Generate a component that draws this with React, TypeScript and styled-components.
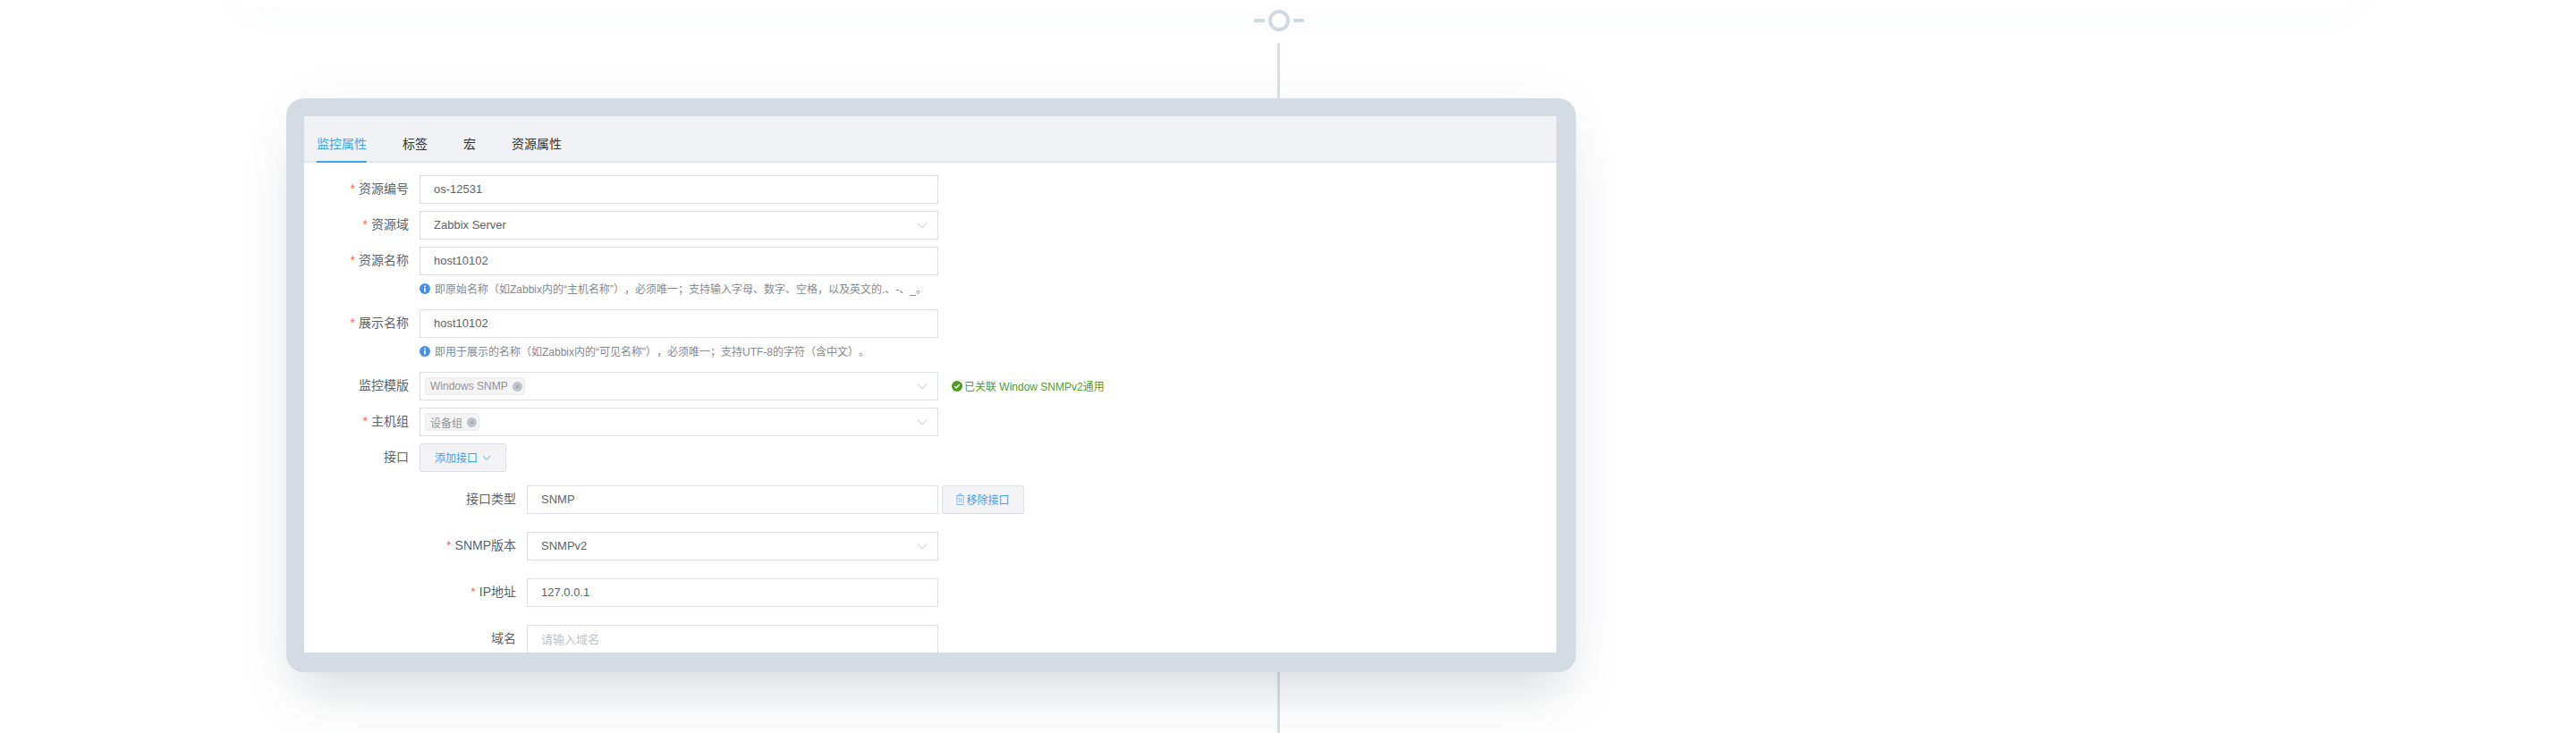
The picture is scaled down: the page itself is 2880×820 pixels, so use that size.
import React from 'react';
import styled, { createGlobalStyle } from 'styled-components';

const GlobalStyle = createGlobalStyle`
  html, body {
    margin: 0;
    padding: 0;
    background: #fff;
  }
  * {
    box-sizing: border-box;
  }
`;

const Page = styled.div`
  position: relative;
  width: 2880px;
  height: 820px;
  padding: 110px 0 0 320px;
  overflow: hidden;
  background: #fff;
  font-family: "Liberation Sans", "Noto Sans CJK SC", sans-serif;
  text-spacing-trim: space-all;
`;

/* the card above this one in the flow chart, only its shadow is still visible */
const PreviousCard = styled.div`
  position: absolute;
  left: 270px;
  top: -60px;
  width: 2360px;
  height: 68px;
  box-shadow: 0 0 50px rgba(90, 110, 120, 0.035);
`;

const Connector = styled.div<{ $top: number; $height: number }>`
  position: absolute;
  left: 1428px;
  top: ${p => p.$top}px;
  width: 3px;
  height: ${p => p.$height}px;
  background: #d9dfe9;
`;

const NodeIcon = styled.svg`
  position: absolute;
  left: 1400px;
  top: 9px;
`;

const Frame = styled.div`
  position: relative;
  width: 1442px;
  padding: 20px 22px 22px 20px;
  border-radius: 20px;
  background: #d5dbe2;
  box-shadow: 0 35px 60px -15px rgba(90, 100, 115, 0.22), 0 0 60px rgba(90, 100, 115, 0.03);
`;

const Screen = styled.div`
  height: 600px;
  overflow: hidden;
  background: #fff;
`;

const TabBar = styled.div`
  display: flex;
  gap: 40px;
  height: 52px;
  padding: 10px 0 0 14px;
  background: #f0f2f5;
  box-shadow: inset 0 -2px 0 #e4e7ed;
`;

const Tab = styled.div<{ $active?: boolean }>`
  height: 42px;
  border-bottom: 2px solid ${p => (p.$active ? '#3ea6ea' : 'transparent')};
  font-size: 14px;
  line-height: 42px;
  color: ${p => (p.$active ? '#3ea6ea' : '#303133')};
`;

const Form = styled.div`
  padding-top: 14px;
`;

const Row = styled.div<{ $gap?: number }>`
  display: flex;
  align-items: center;
  margin-bottom: ${p => p.$gap ?? 8}px;
`;

const Label = styled.div<{ $width: number }>`
  flex: none;
  width: ${p => p.$width}px;
  padding: 0 12px 2px 0;
  font-size: 14px;
  line-height: 30px;
  text-align: right;
  color: #606266;
`;

const Required = styled.span`
  margin-right: 4px;
  color: #f56c6c;
`;

const Field = styled.div<{ $width: number }>`
  flex: none;
  display: flex;
  align-items: center;
  justify-content: space-between;
  width: ${p => p.$width}px;
  height: 32px;
  padding: 0 11px 1px 15px;
  border: 1px solid #dcdfe9;
  background: #fff;
  font-size: 13px;
  color: #606266;
`;

const TagField = styled(Field)`
  padding: 0 11px 0 5px;
`;

const Placeholder = styled.span`
  color: #c0c4cc;
`;

const Tag = styled.span`
  display: inline-flex;
  align-items: center;
  gap: 5px;
  height: 20px;
  padding: 0 2px 0 5px;
  border: 1px solid #e9e9eb;
  border-radius: 4px;
  background: #f4f4f5;
  font-size: 12px;
  color: #909399;
`;

const Tip = styled.div`
  display: flex;
  align-items: center;
  gap: 5px;
  height: 30px;
  margin: 0 0 8px 129px;
  padding-bottom: 1px;
  font-size: 12px;
  color: #84888f;
`;

const Button = styled.button<{ $width: number; $gap: number; $left?: number }>`
  flex: none;
  display: flex;
  align-items: center;
  justify-content: center;
  gap: ${p => p.$gap}px;
  width: ${p => p.$width}px;
  height: 32px;
  margin-left: ${p => p.$left ?? 0}px;
  padding: 0 0 1px;
  border: 1px solid #dcdfe6;
  border-radius: 3px;
  background: #f4f4f6;
  font-family: inherit;
  font-size: 12px;
  color: #3e9fe8;
`;

const Hint = styled.div`
  display: flex;
  align-items: center;
  gap: 2px;
  margin-left: 15px;
  padding-bottom: 1px;
  font-size: 12px;
  color: #529b2e;
`;

const Chevron: React.FC<{ size?: number; color?: string }> = ({ size = 12, color = '#c0c4cc' }) => (
  <svg width={size} height={size} viewBox="0 0 12 12" fill="none">
    <path d="M1 3.5 6 8.8l5-5.3" stroke={color} strokeWidth="1" />
  </svg>
);

const InfoIcon = () => (
  <svg width="12" height="12" viewBox="0 0 12 12">
    <circle cx="6" cy="6" r="6" fill="#4a90e2" />
    <rect x="5.2" y="5" width="1.6" height="4.4" fill="#fff" />
    <rect x="5.2" y="2.6" width="1.6" height="1.5" fill="#fff" />
  </svg>
);

const CheckIcon = () => (
  <svg width="12" height="12" viewBox="0 0 12 12" fill="none">
    <circle cx="6" cy="6" r="6" fill="#4f9a24" />
    <path d="M3.2 6.1 5.2 8l3.6-4" stroke="#fff" strokeWidth="1.4" />
  </svg>
);

const CloseIcon = () => (
  <svg width="11" height="11" viewBox="0 0 12 12" fill="none">
    <circle cx="6" cy="6" r="6" fill="#c0c4cc" />
    <path d="M4 4l4 4M8 4l-4 4" stroke="#7d8088" strokeWidth="0.8" />
  </svg>
);

const TrashIcon = () => (
  <svg width="9" height="13" viewBox="0 0 9 13" fill="none" stroke="#7fb3e6" strokeWidth="0.9">
    <path d="M0 2.5h9M3 2.5V.7h3v1.8M1 2.5v10h7v-10M3.3 5v5M5.7 5v5" />
  </svg>
);

const FormField: React.FC<{
  label: string;
  required?: boolean;
  labelWidth?: number;
  fieldWidth?: number;
  gap?: number;
  select?: boolean;
  children?: React.ReactNode;
  after?: React.ReactNode;
}> = ({ label, required, labelWidth = 129, fieldWidth = 580, gap, select, children, after }) => (
  <Row $gap={gap}>
    <Label $width={labelWidth}>
      {required && <Required>*</Required>}
      {label}
    </Label>
    <Field $width={fieldWidth}>
      <span>{children}</span>
      {select && <Chevron />}
    </Field>
    {after}
  </Row>
);

const TagSelect: React.FC<{ label: string; required?: boolean; tag: string; after?: React.ReactNode }> = ({
  label,
  required,
  tag,
  after,
}) => (
  <Row>
    <Label $width={129}>
      {required && <Required>*</Required>}
      {label}
    </Label>
    <TagField $width={580}>
      <Tag>
        {tag}
        <CloseIcon />
      </Tag>
      <Chevron />
    </TagField>
    {after}
  </Row>
);

const App: React.FC = () => (
  <Page>
    <GlobalStyle />
    <PreviousCard />
    <NodeIcon width="60" height="28" viewBox="0 0 60 28" fill="none" stroke="#d2d9e2">
      <circle cx="30" cy="14" r="10" strokeWidth="4" />
      <path d="M2 14h12M46 14h12" strokeWidth="4" />
    </NodeIcon>
    <Connector $top={48} $height={62} />
    <Connector $top={752} $height={68} />
    <Frame>
      <Screen>
        <TabBar>
          <Tab $active>监控属性</Tab>
          <Tab>标签</Tab>
          <Tab>宏</Tab>
          <Tab>资源属性</Tab>
        </TabBar>
        <Form>
          <FormField label="资源编号" required>os-12531</FormField>
          <FormField label="资源域" required select>Zabbix Server</FormField>
          <FormField label="资源名称" required gap={0}>host10102</FormField>
          <Tip>
            <InfoIcon />
            即原始名称（如Zabbix内的“主机名称”），必须唯一；支持输入字母、数字、空格，以及英文的.、-、_。
          </Tip>
          <FormField label="展示名称" required gap={0}>host10102</FormField>
          <Tip>
            <InfoIcon />
            即用于展示的名称（如Zabbix内的“可见名称”），必须唯一；支持UTF-8的字符（含中文）。
          </Tip>
          <TagSelect
            label="监控模版"
            tag="Windows SNMP"
            after={
              <Hint>
                <CheckIcon />
                已关联 Window SNMPv2通用
              </Hint>
            }
          />
          <TagSelect label="主机组" required tag="设备组" />
          <Row $gap={15}>
            <Label $width={129}>接口</Label>
            <Button $width={97} $gap={5}>
              添加接口
              <Chevron size={10} color="#3e9fe8" />
            </Button>
          </Row>
          <FormField
            label="接口类型"
            labelWidth={249}
            fieldWidth={460}
            gap={20}
            after={
              <Button $width={92} $gap={2} $left={4}>
                <TrashIcon />
                移除接口
              </Button>
            }
          >
            SNMP
          </FormField>
          <FormField label="SNMP版本" required labelWidth={249} fieldWidth={460} gap={20} select>SNMPv2</FormField>
          <FormField label="IP地址" required labelWidth={249} fieldWidth={460} gap={20}>127.0.0.1</FormField>
          <FormField label="域名" labelWidth={249} fieldWidth={460} gap={20}>
            <Placeholder>请输入域名</Placeholder>
          </FormField>
        </Form>
      </Screen>
    </Frame>
  </Page>
);

export default App;
